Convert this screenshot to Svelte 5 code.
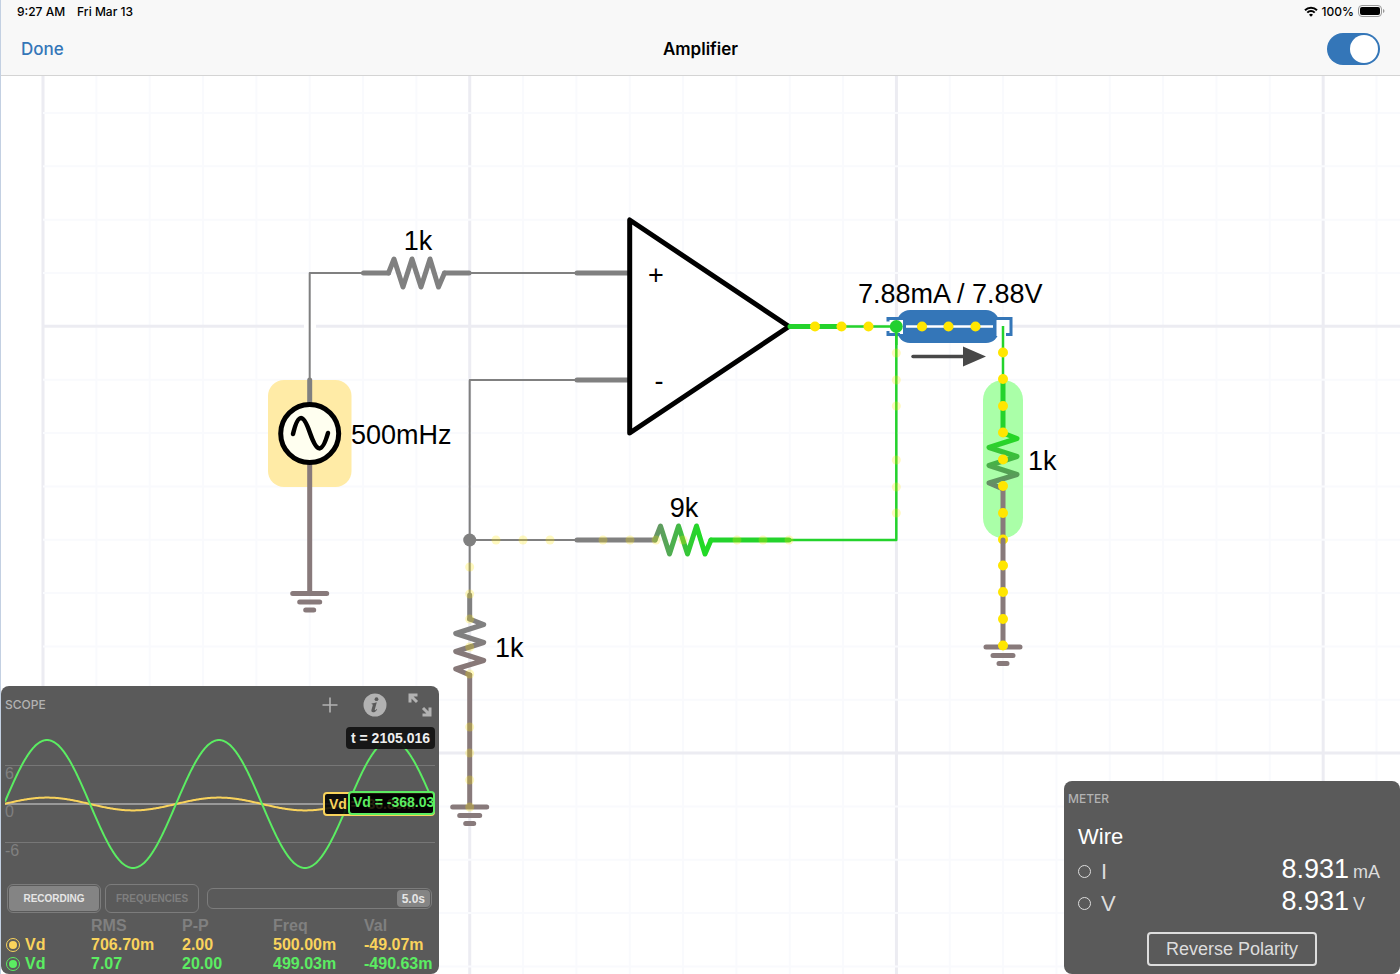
<script>
	let running = true;
	let range = 5;
	let mode = 'recording';
	let reversed = false;

	// schematic grid: 8 minor cells per major cell
	const cell = 53.34;
	const cols = Array.from({ length: 26 }, (_, i) => ({ at: 43 + i * cell, major: i % 8 === 0 }));
	const rows = Array.from({ length: 17 }, (_, i) => ({ at: 113 + i * cell, major: i % 8 === 4 }));

	const zigzag = 'M-28 0L-22.5 -14L-13.5 14L-4.5 -14L4.5 14L13.5 -14L22 14L28 0';

	const grounds = [
		{ x: 309.7, y: 593.5 },
		{ x: 469.7, y: 807 },
		{ x: 1003, y: 647 }
	];

	const currentDots = [
		[815, 326.5], [841.5, 326.5], [868.5, 326.5],
		[922, 326.5], [948.5, 326.5], [975.5, 326.5],
		[1003, 352.5], [1003, 379], [1003, 406], [1003, 432.5], [1003, 459.5], [1003, 486],
		[1003, 513], [1003, 565.5], [1003, 592], [1003, 619], [1003, 645.5]
	];

	const faintDots = [
		[496, 540], [523, 540], [550, 540], [603, 540], [630, 540], [656, 540],
		[683, 540], [737, 540], [763, 540], [789, 540],
		[896.3, 353], [896.3, 380], [896.3, 406], [896.3, 460], [896.3, 487], [896.3, 513],
		[469.7, 567], [469.7, 594], [469.7, 619], [469.7, 647], [469.7, 674],
		[469.7, 727], [469.7, 753], [469.7, 780], [469.7, 807]
	];

	const traces = [
		{ name: 'Vd', color: 'yellow', on: true, amp: 6.4, values: ['706.70m', '2.00', '500.00m', '-49.07m'] },
		{ name: 'Vd', color: 'green', on: true, amp: 64, values: ['7.07', '20.00', '499.03m', '-490.63m'] }
	];

	function wave(amp) {
		let d = '';
		for (let x = 0; x <= 429; x += 1) {
			const y = 78 - amp * Math.sin((2 * Math.PI * (x + 1)) / 172);
			d += (x ? 'L' : 'M') + x + ' ' + y.toFixed(2);
		}
		return d;
	}
</script>

<main>
	<header>
		<div class="status">
			<span>9:27 AM</span>
			<span>Fri Mar 13</span>
			<span class="battery">
				<svg width="14" height="11" viewBox="0 0 14 11" fill="none" stroke="#000" stroke-width="2">
					<path d="M1 4.2a8.4 8.4 0 0 1 12 0" />
					<path d="M3.3 6.6a5.2 5.2 0 0 1 7.4 0" />
					<path d="M7 10.8L5 8.7a2.8 2.8 0 0 1 4 0z" fill="#000" stroke="none" />
				</svg>
				<span>100%</span>
				<svg width="27" height="12" viewBox="0 0 27 12">
					<rect x="0.5" y="0.5" width="23" height="11" rx="3.5" fill="none" stroke="#999" />
					<rect x="2" y="2" width="20" height="8" rx="2" fill="#000" />
					<path d="M25 4v4q1.5-.6 1.5-2T25 4z" fill="#999" />
				</svg>
			</span>
		</div>
		<nav>
			<button class="done">Done</button>
			<h1>Amplifier</h1>
			<input class="switch" type="checkbox" aria-label="Run simulation" bind:checked={running} />
		</nav>
	</header>

	<section class="canvas">
		<svg class="schematic" viewBox="1 76 1399 898" preserveAspectRatio="xMinYMin slice">
			<defs>
				<linearGradient id="fade9k" gradientUnits="userSpaceOnUse" x1="-28" y1="0" x2="28" y2="0">
					<stop offset="0" stop-color="#689468" />
					<stop offset="0.8" stop-color="#22da26" />
				</linearGradient>
				<linearGradient id="fadeLow" gradientUnits="userSpaceOnUse" x1="-28" y1="0" x2="28" y2="0">
					<stop offset="0.3" stop-color="#808080" />
					<stop offset="0.7" stop-color="#877878" />
				</linearGradient>
				<linearGradient id="fadeLoad" gradientUnits="userSpaceOnUse" x1="-28" y1="0" x2="28" y2="0">
					<stop offset="0.15" stop-color="#27d627" />
					<stop offset="1" stop-color="#6d856d" />
				</linearGradient>
			</defs>

			{#each cols as line}
				<line class="grid" class:major={line.major} x1={line.at} x2={line.at} y1="76" y2="974" />
			{/each}
			{#each rows as line}
				<line class="grid" class:major={line.major} x1="43" x2="1400" y1={line.at} y2={line.at} />
			{/each}

			<!-- highlighted parts -->
			<rect x="304" y="320" width="12" height="12" fill="#fff" />
			<rect x="268" y="380" width="83.5" height="107" rx="16" fill="#ffeba6" />
			<rect x="983" y="380" width="40" height="158" rx="20" fill="#aaffa8" />

			<!-- input side -->
			<path class="wire" d="M309.7 380V273H363M470 273H576M469.7 593V380H576M469.7 540H576" />
			<path class="lead" d="M363.5 273H388.5M444.5 273H469M577 273H629M577 380H629M577 540H655M469.7 595V619" />
			<path class="lead" d="M309.7 380V403" />
			<path class="lead earth" d="M309.7 464V592M469.7 675V806" />
			<circle cx="309.7" cy="433.5" r="29" fill="#fffff0" stroke="#000" stroke-width="5" />
			<path
				d="M293 434C298 413 303 413 310 433S322 454 328 433"
				fill="none"
				stroke="#000"
				stroke-width="4.5"
				stroke-linecap="round"
			/>
			<path class="lead" transform="translate(416.5 273)" d={zigzag} />
			<path class="lead" transform="translate(469.7 647) rotate(90)" style:stroke="url(#fadeLow)" d={zigzag} />
			<circle cx="469.7" cy="540" r="6.5" fill="#808080" />

			<!-- op amp -->
			<path
				d="M629.7 220V433L789 326.5z"
				fill="#fff"
				stroke="#000"
				stroke-width="5"
				stroke-linejoin="round"
			/>

			<!-- output side -->
			<path class="wire live" d="M841 326.5H896.3V540H788" />
			<path class="lead live" d="M790 326.5H842M711 540H789" />
			<path class="lead" transform="translate(683 540)" style:stroke="url(#fade9k)" d={zigzag} />

			<rect x="897" y="310" width="102" height="33" rx="13" fill="#3476b8" />
			<rect x="889" y="320" width="14" height="14" fill="#fff" />
			<rect x="996.5" y="320" width="14" height="16" fill="#fff" />
			<path
				d="M900 318.5H888V321.5M888 331V334.5H900M997 318.5H1011V334.5H1006"
				fill="none"
				stroke="#3476b8"
				stroke-width="3"
			/>
			<path d="M906 326.5H993" stroke="#fff" stroke-width="2.5" />
			<path class="wire live" d="M889 326.5H896.3V345M1003 326V380" />
			<circle cx="896.3" cy="326.5" r="6.5" fill="#22d030" />
			<path class="lead live" d="M1003 382V433" />
			<path class="lead" transform="translate(1003 461) rotate(90)" style:stroke="url(#fadeLoad)" d={zigzag} />
			<path class="lead earth" d="M1003 489V537" />
			<circle cx="1003" cy="539.5" r="5" fill="#ffe600" />
			<path class="lead earth" d="M1003 540V646" />

			{#each grounds as g}
				<path
					class="lead earth"
					d="M{g.x - 17} {g.y}h34M{g.x - 10} {g.y + 8.5}h20M{g.x - 4} {g.y + 16.5}h8"
				/>
			{/each}

			{#each faintDots as [x, y]}
				<circle cx={x} cy={y} r="4.5" fill="#ffe600" opacity="0.25" />
			{/each}
			{#each currentDots as [x, y]}
				<circle cx={x} cy={y} r="5" fill="#ffe600" />
			{/each}

			<path d="M913 356.5H964" stroke="#484848" stroke-width="3.5" stroke-linecap="round" />
			<path d="M963 346.5L986 356.5L963 366.5z" fill="#484848" />

			<g class="labels">
				<text x="418" y="250" text-anchor="middle">1k</text>
				<text x="684" y="517" text-anchor="middle">9k</text>
				<text x="1028" y="470">1k</text>
				<text x="495" y="657">1k</text>
				<text x="351" y="444">500mHz</text>
				<text x="858" y="303">7.88mA / 7.88V</text>
				<text x="656" y="284" text-anchor="middle">+</text>
				<text x="659" y="390" text-anchor="middle">-</text>
			</g>
		</svg>

		<div class="panels">
			<section class="panel scope">
				<div class="panel-head">
					<h2>SCOPE</h2>
					<div class="tools">
						<button aria-label="Add trace">
							<svg width="24" height="24" viewBox="0 0 24 24" stroke="#b2b2b2" stroke-width="1.6">
								<path d="M4.5 12h15M12 4.5v15" />
							</svg>
						</button>
						<button aria-label="Info">
							<svg width="24" height="24" viewBox="0 0 24 24">
								<circle cx="12" cy="12" r="11.5" fill="#b2b2b2" />
								<circle cx="13.5" cy="6.2" r="1.9" fill="#5a5a5a" />
								<path d="M8.6 10.4c1.8-.2 3.4-.7 5.2-1.2l-2 7.2c-.3 1.1.5 1.2 1.8-.5l.6.5c-1.3 2-2.7 2.9-4.1 2.9-1.5 0-2-1.1-1.6-2.5l1.2-4.2c.2-.9.1-1.4-1.2-1.5z" fill="#5a5a5a" />
							</svg>
						</button>
						<button aria-label="Expand">
							<svg width="24" height="24" viewBox="0 0 24 24" fill="none" stroke="#b2b2b2" stroke-width="3">
								<path d="M2 9.5V2H9.5M2.5 2.5L9 9M22 14.5V22H14.5M21.5 21.5L15 15" />
							</svg>
						</button>
					</div>
				</div>

				<div class="plot">
					<svg width="430" height="154" viewBox="0 0 430 154">
						<path d="M0 39.5H430M0 116.5H430" stroke="#777" />
						<path d="M0 78H430" stroke="#999" stroke-width="2" />
						<text x="0" y="53">6</text>
						<text x="0" y="91">0</text>
						<text x="0" y="130">-6</text>
						{#each traces as trace}
							<path class="trace {trace.color}" d={wave(trace.amp)} />
						{/each}
					</svg>
					<span class="tag time">t = 2105.016</span>
					<span class="tag yellow">Vd = -36.80m</span>
					<span class="tag green">Vd = -368.03m</span>
				</div>

				<div class="controls">
					<button class="mode" class:active={mode === 'recording'} on:click={() => (mode = 'recording')}>
						<span>RECORDING</span>
					</button>
					<button class="mode" class:active={mode === 'frequencies'} on:click={() => (mode = 'frequencies')}>
						<span>FREQUENCIES</span>
					</button>
					<label class="range">
						<input type="range" min="1" max="5" step="0.5" aria-label="Time span" bind:value={range} />
						<span>{range.toFixed(1)}s</span>
					</label>
				</div>

				<table>
					<thead>
						<tr>
							<td></td>
							<th>RMS</th>
							<th>P-P</th>
							<th>Freq</th>
							<th>Val</th>
						</tr>
					</thead>
					<tbody>
						{#each traces as trace}
							<tr class={trace.color}>
								<td>
									<label>
										<input type="checkbox" bind:checked={trace.on} />
										{trace.name}
									</label>
								</td>
								{#each trace.values as value}
									<td>{value}</td>
								{/each}
							</tr>
						{/each}
					</tbody>
				</table>
			</section>

			<section class="panel meter">
				<h2>METER</h2>
				<h3>Wire</h3>
				<div class="reading">
					<label><input type="radio" name="quantity" value="I" /> I</label>
					<span class="value">8.931</span>
					<span class="unit">mA</span>
				</div>
				<div class="reading">
					<label><input type="radio" name="quantity" value="V" /> V</label>
					<span class="value">8.931</span>
					<span class="unit">V</span>
				</div>
				<button class="reverse" on:click={() => (reversed = !reversed)}>Reverse Polarity</button>
			</section>
		</div>
	</section>
</main>

<style>
	:global(body) {
		margin: 0;
		background: #fff;
	}

	main {
		display: flex;
		flex-direction: column;
		box-sizing: border-box;
		min-height: 100vh;
		border-left: 1px solid #c3d0e2;
		font-family: 'Liberation Sans', Arial, sans-serif;
	}

	button {
		padding: 0;
		border: none;
		background: none;
		font-family: inherit;
		cursor: pointer;
	}

	input {
		appearance: none;
		margin: 0;
		cursor: pointer;
	}

	h1,
	h2,
	h3 {
		margin: 0;
	}

	header {
		border-bottom: 1px solid #d4d4d4;
		background: #f8f8f8;
		font-family: Inter, sans-serif;
	}

	.status {
		display: flex;
		align-items: center;
		gap: 12px;
		height: 22px;
		padding: 0 15px 0 16px;
		font-size: 12px;
		font-weight: 500;
	}

	.battery {
		display: flex;
		align-items: center;
		gap: 4px;
		margin-left: auto;
	}

	nav {
		display: grid;
		grid-template-columns: 1fr auto 1fr;
		align-items: center;
		height: 53px;
		padding: 0 20px;
	}

	.done {
		justify-self: start;
		color: #3476b8;
		font-size: 17px;
		font-weight: 500;
	}

	h1 {
		font-size: 17px;
		font-weight: 600;
	}

	.switch {
		justify-self: end;
		box-sizing: border-box;
		width: 53px;
		height: 32px;
		padding: 2px;
		border-radius: 16px;
		background: #ccc;
	}

	.switch::before {
		content: '';
		display: block;
		width: 28px;
		height: 28px;
		border-radius: 50%;
		background: #fff;
	}

	.switch:checked {
		background: #3476b8;
	}

	.switch:checked::before {
		margin-left: auto;
	}

	.canvas {
		position: relative;
		display: flex;
		flex: 1;
		overflow: hidden;
	}

	.schematic {
		position: absolute;
		width: 100%;
		height: 100%;
	}

	.grid {
		stroke: #f9fafd;
		stroke-width: 2;
	}

	.grid.major {
		stroke: #ececf2;
		stroke-width: 3;
	}

	.wire,
	.lead {
		fill: none;
		stroke: #808080;
		stroke-width: 2;
		stroke-linejoin: round;
	}

	.lead {
		stroke-width: 5;
		stroke-linecap: round;
	}

	.live {
		stroke: #24d32c;
	}

	.wire.live {
		stroke-width: 2.5;
	}

	.earth {
		stroke: #887a7b;
	}

	.labels {
		font-size: 27px;
	}

	.panels {
		position: relative;
		display: flex;
		flex: 1;
		align-items: flex-end;
		justify-content: space-between;
	}

	.panel {
		box-sizing: border-box;
		border-radius: 8px;
		background: #5a5a5a;
	}

	.panel h2 {
		color: #b2b2b2;
		font-family: Inter, sans-serif;
		font-size: 12px;
		font-weight: 500;
		line-height: 16px;
	}

	.scope {
		width: 438px;
		padding: 0 4px 1px;
	}

	.panel-head {
		display: flex;
		align-items: center;
		justify-content: space-between;
		height: 40px;
		padding-right: 3px;
	}

	.panel-head h2 {
		padding-bottom: 2px;
	}

	.tools {
		display: flex;
		gap: 21px;
		padding-bottom: 3px;
	}

	.tools svg {
		display: block;
	}

	.plot {
		position: relative;
		overflow: hidden;
		height: 154px;
	}

	.plot text {
		fill: #808080;
		font-size: 16px;
	}

	.trace {
		fill: none;
		stroke-width: 2;
	}

	.trace.yellow {
		stroke: #f9d35c;
	}

	.trace.green {
		stroke: #5bed62;
	}

	.tag {
		position: absolute;
		right: 0;
		box-sizing: border-box;
		overflow: hidden;
		height: 24px;
		padding: 0 4px;
		border: 2px solid;
		border-radius: 4px;
		background: rgba(0, 0, 0, 0.85);
		font-size: 14px;
		font-weight: bold;
		line-height: 20px;
		white-space: nowrap;
	}

	.tag.time {
		top: 1px;
		height: 22px;
		padding: 0 5px;
		border: none;
		background: rgba(20, 20, 20, 0.95);
		color: #eee;
		line-height: 22px;
	}

	.tag.yellow {
		top: 66px;
		width: 112px;
		color: #f9d35c;
	}

	.tag.green {
		top: 65px;
		width: 87px;
		padding-left: 3px;
		color: #5bed62;
		line-height: 19px;
	}

	.controls {
		display: flex;
		align-items: center;
		gap: 4px;
		height: 36px;
		padding: 0 3px 0 2px;
	}

	.mode {
		box-sizing: border-box;
		width: 94px;
		height: 29px;
		padding: 1px;
		border: 1px solid #7c7c7c;
		border-radius: 6px;
		color: #7f7f7f;
		font-size: 10px;
		font-weight: bold;
	}

	.mode span {
		display: block;
		border-radius: 4px;
		line-height: 25px;
	}

	.mode.active {
		color: #e6e6e6;
	}

	.mode.active span {
		background: #848484;
	}

	.range {
		position: relative;
		flex: 1;
		margin-left: 4px;
	}

	.range input {
		display: block;
		box-sizing: border-box;
		width: 100%;
		height: 21px;
		padding: 0 1px;
		border: 1px solid #7c7c7c;
		border-radius: 6px;
		background: none;
	}

	.range input::-webkit-slider-thumb {
		appearance: none;
		width: 33px;
		height: 17px;
		border-radius: 4px;
		background: #848484;
	}

	.range span {
		position: absolute;
		top: 0;
		right: 7px;
		color: #e6e6e6;
		font-size: 12px;
		font-weight: bold;
		line-height: 22px;
		pointer-events: none;
	}

	table {
		width: 100%;
		border-collapse: collapse;
		table-layout: fixed;
		font-size: 16px;
		font-weight: bold;
		line-height: 19px;
	}

	th,
	td {
		width: 91px;
		padding: 0;
		text-align: left;
		white-space: nowrap;
	}

	th {
		color: #808080;
	}

	tr > :first-child {
		width: 86px;
	}

	tr > :last-child {
		width: 71px;
	}

	tr.yellow {
		color: #f9d35c;
	}

	tr.green {
		color: #5bed62;
	}

	td label {
		display: flex;
		align-items: center;
		gap: 5px;
		padding-left: 1px;
	}

	td input {
		box-sizing: border-box;
		width: 14px;
		height: 14px;
		padding: 2px;
		border: 1px solid;
		border-radius: 50%;
		color: inherit;
	}

	td input:checked {
		background: currentColor content-box;
	}

	.meter {
		display: flex;
		flex-direction: column;
		width: 336px;
		padding: 10px 4px 8px;
		color: #fff;
	}

	h3 {
		padding: 14px 10px 0;
		font-size: 22px;
		font-weight: normal;
		line-height: 32px;
	}

	.reading {
		display: flex;
		align-items: baseline;
		height: 32px;
		padding-left: 10px;
		line-height: 32px;
	}

	.reading label {
		display: flex;
		flex: 1;
		align-items: center;
		gap: 10px;
		color: #ddd;
		font-size: 22px;
	}

	.reading input {
		box-sizing: border-box;
		width: 13px;
		height: 13px;
		border: 1px solid #ddd;
		border-radius: 50%;
	}

	.reading input:checked {
		background: #ddd;
	}

	.value {
		font-size: 27px;
	}

	.unit {
		width: 47px;
		box-sizing: border-box;
		padding-left: 4px;
		color: #ddd;
		font-size: 18px;
	}

	.reverse {
		align-self: center;
		box-sizing: border-box;
		width: 170px;
		height: 34px;
		margin-top: 15px;
		border: 2px solid #ddd;
		border-radius: 4px;
		color: #ddd;
		font-size: 18px;
	}
</style>
